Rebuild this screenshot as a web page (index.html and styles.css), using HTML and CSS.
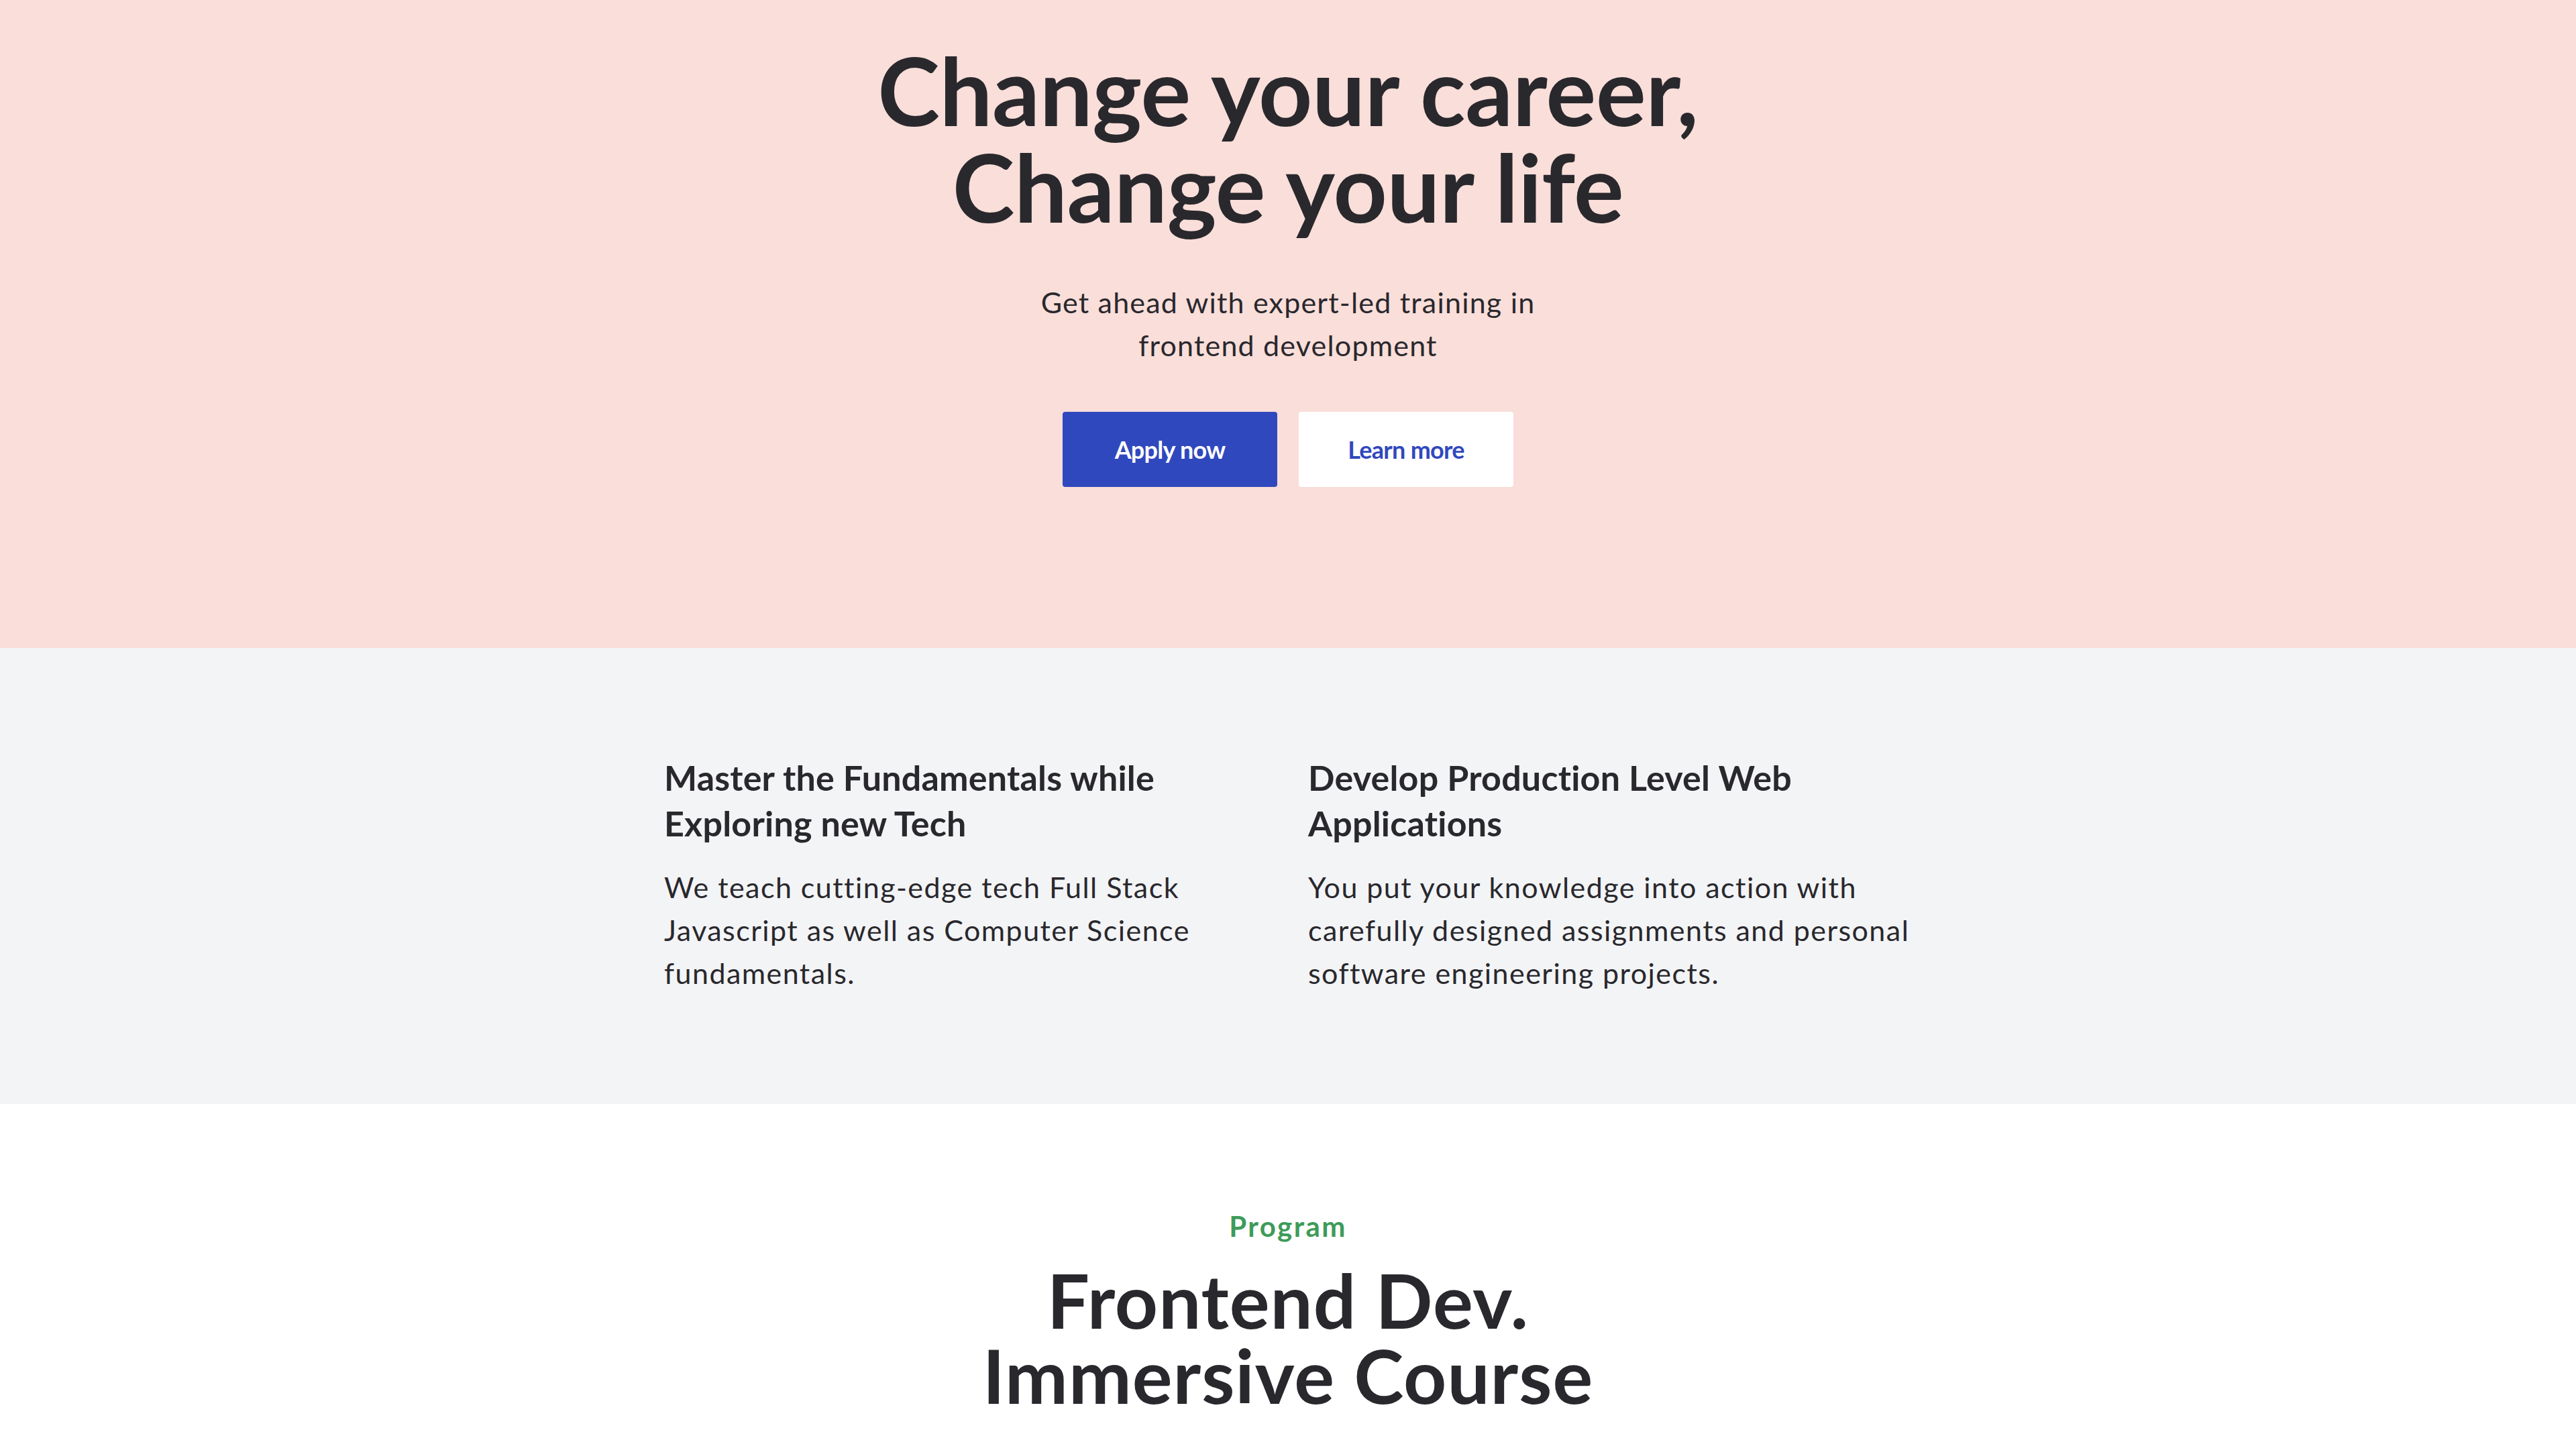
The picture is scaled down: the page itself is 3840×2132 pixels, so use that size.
FILE: index.html
```html
<!DOCTYPE html>
<html lang="en">
<head>
<meta charset="utf-8">
<title>Change your career</title>
<link rel="stylesheet" href="styles.css">
</head>
<body>
<section class="hero">
  <h1 class="hero-title">Change your career,<br>Change your life</h1>
  <p class="hero-sub">Get ahead with expert-led training in frontend development</p>
  <div class="hero-actions">
    <a class="btn btn-primary" href="#">Apply now</a>
    <a class="btn btn-secondary" href="#">Learn more</a>
  </div>
</section>
<section class="features">
  <div class="features-grid">
    <article class="feature">
      <h3 class="feature-title">Master the Fundamentals while Exploring new Tech</h3>
      <p class="feature-text">We teach cutting-edge tech Full Stack Javascript as well as Computer Science fundamentals.</p>
    </article>
    <article class="feature">
      <h3 class="feature-title">Develop Production Level Web Applications</h3>
      <p class="feature-text">You put your knowledge into action with carefully designed assignments and personal software engineering projects.</p>
    </article>
  </div>
</section>
<section class="program">
  <p class="eyebrow">Program</p>
  <h2 class="program-title">Frontend Dev.<br>Immersive Course</h2>
</section>
</body>
</html>
```
FILE: styles.css
```css
* { box-sizing: border-box; }
html, body { margin: 0; padding: 0; }
body {
  font-family: "Lato", "Inter", "Liberation Sans", sans-serif;
  color: #29282d;
  background: #ffffff;
}
.hero {
  background: #f9ded9;
  padding: 62px 0 240px;
  display: flex;
  flex-direction: column;
  align-items: center;
  text-align: center;
}
.hero-title {
  margin: 0;
  font-size: 140px;
  line-height: 144px;
  font-weight: 700;
  letter-spacing: -0.003em;
}
.hero-sub {
  margin: 69px 0 0;
  max-width: 800px;
  font-size: 43px;
  line-height: 64px;
  font-weight: 400;
  letter-spacing: 1.2px;
}
.hero-actions {
  margin-top: 67px;
  display: flex;
  gap: 32px;
}
.btn {
  width: 320px;
  height: 112px;
  border-radius: 4px;
  display: flex;
  align-items: center;
  justify-content: center;
  font-size: 36px;
  font-weight: 700;
  letter-spacing: -0.02em;
  text-decoration: none;
}
.btn-primary { background: #3048be; color: #ffffff; }
.btn-secondary { background: #ffffff; color: #3048be; }
.features {
  background: #f3f4f6;
  padding: 159px 0 163px;
}
.features-grid {
  display: grid;
  grid-template-columns: 900px 940px;
  column-gap: 60px;
  justify-content: center;
  padding-left: 40px;
}
.feature-title {
  margin: 0;
  font-size: 52px;
  line-height: 68px;
  font-weight: 700;
  letter-spacing: 0.2px;
}
.feature-text {
  margin: 30px 0 0;
  font-size: 43px;
  line-height: 64px;
  font-weight: 400;
  letter-spacing: 1.45px;
}
.program {
  padding: 154px 0 40px;
  text-align: center;
}
.eyebrow {
  margin: 0;
  font-size: 42px;
  line-height: 56px;
  font-weight: 700;
  letter-spacing: 2.4px;
  color: #3e9b58;
}
.program-title {
  margin: 26px 0 0;
  font-size: 112px;
  line-height: 112px;
  font-weight: 700;
  letter-spacing: 1px;
}
```
